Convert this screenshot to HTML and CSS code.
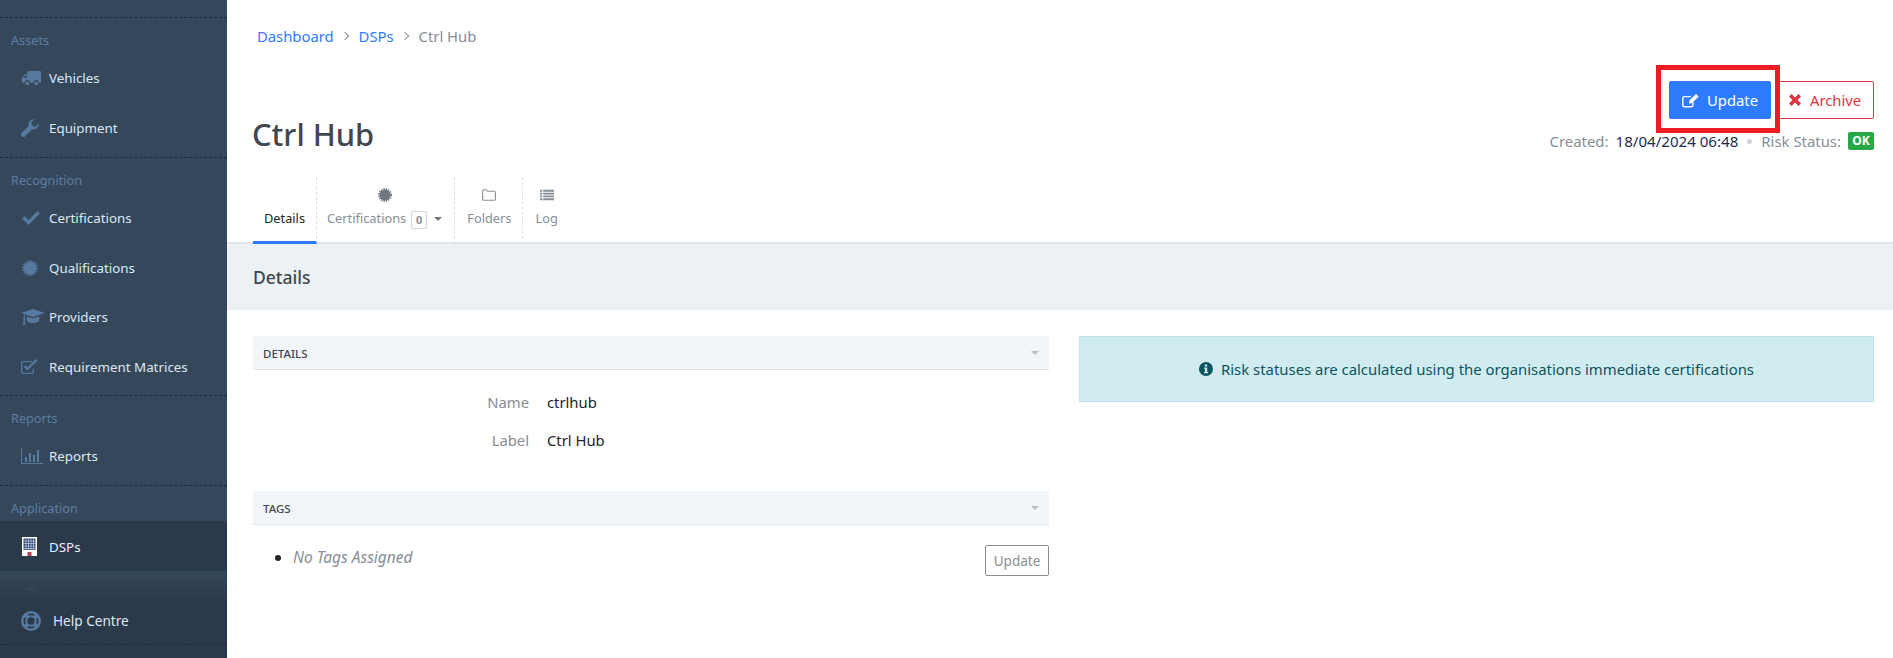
FILE: index.html
```html
<!DOCTYPE html>
<html lang="en">
<head>
<meta charset="utf-8">
<title>Ctrl Hub</title>
<link rel="stylesheet" href="styles.css">
</head>
<body>
<svg class="defs" width="0" height="0" aria-hidden="true">
  <symbol id="i-truck" viewBox="0 0 18 14"><path d="M6 0h11a1 1 0 0 1 1 1v9.500a.5.5 0 0 1-.5.5H16a2.500 2.500 0 0 0-5 0H7.500a2.500 2.500 0 0 0-5 0H1a1 1 0 0 1-1-1V6.500L2.600 3H5V1a1 1 0 0 1 1-1zM1.500 6.500H4.600V4.200H3.100z" fill-rule="evenodd"/><circle cx="5" cy="11.500" r="1.700"/><circle cx="13.500" cy="11.500" r="1.700"/></symbol>
  <symbol id="i-wrench" viewBox="0 0 18 18"><path d="M17.800 4.300c.3 2.500-1 4.900-3.300 5.800-1.200.5-2.500.5-3.600.2L4 17.400c-.8.800-2.100.8-2.900 0l-.6-.6c-.8-.8-.8-2 0-2.800L7.700 7c-.4-1.200-.3-2.500.2-3.600C8.800 1.200 11.200-.1 13.700.200L10.600 3.300v2.100l2 2h2.100z"/></symbol>
  <symbol id="i-check" viewBox="0 0 18 14"><path d="M6.600 14 0 7.400l2.500-2.500 4.100 4.100L15.500 0 18 2.500z"/></symbol>
  <symbol id="i-cert" viewBox="0 0 16 16"><circle cx="8" cy="8" r="6.300"/><circle cx="8" cy="8" r="6.900" fill="none" stroke="currentColor" stroke-width="2.200" stroke-dasharray="1.500 1.210"/></symbol>
  <symbol id="i-cap" viewBox="0 0 24 16"><path d="M12 0 24 4 12 8 4.800 5.600C4.200 6.400 3.900 7.400 3.800 8.500c.4.200.6.600.6 1 0 .4-.2.700-.5.900L4.500 16H2l.6-5.600c-.3-.2-.5-.5-.5-.9 0-.4.200-.8.600-1 .1-1.300.5-2.500 1.200-3.300L0 4z"/><path d="M6 7.500l6 2 6-2 .3 3.500c0 1.600-2.800 3-6.300 3S5.700 12.600 5.700 11z"/></symbol>
  <symbol id="i-checksq" viewBox="0 0 18 16"><path d="M13 9v3.500A2.500 2.500 0 0 1 10.500 15H2.500A2.500 2.500 0 0 1 0 12.500v-8A2.500 2.500 0 0 1 2.500 2h8c.4 0 .8.100 1.100.2l-1.100 1.100H2.500c-.7 0-1.200.5-1.200 1.200v8c0 .7.500 1.200 1.200 1.200h8c.7 0 1.200-.5 1.200-1.200v-2.200z"/><path d="M6.300 11.500 2.600 7.800l1.600-1.600 2.100 2.100L15 0l1.600 1.600z"/></symbol>
  <symbol id="i-bars" viewBox="0 0 22 16"><path d="M0 0h1v15h21v1H0z"/><path d="M4 9h2v5H4zM8 5h2v9H8zM12 7h2v7h-2zM16 2h2v12h-2z"/></symbol>
  <symbol id="i-ring" viewBox="0 0 20 20"><circle cx="10" cy="10" r="10"/><circle cx="10" cy="10" r="3.700" fill="#2b3a4a"/><circle cx="10" cy="10" r="6.600" fill="none" stroke="#2b3a4a" stroke-width="1.700" stroke-dasharray="6.500 3.870" stroke-dashoffset="3.250"/></symbol>
  <symbol id="i-edit" viewBox="0 0 17 15"><path d="M11 9.200v2.900c0 .9-.8 1.700-1.700 1.700H2.500c-.9 0-1.700-.8-1.700-1.700V5.300c0-.9.800-1.700 1.700-1.700h6.300" fill="none" stroke="currentColor" stroke-width="1.400"/><path d="M7 10.500l.3-2.900L14 .9l2.600 2.600-6.700 6.700z"/></symbol>
  <symbol id="i-times" viewBox="0 0 12 12"><path d="M2.600 0 6 3.400 9.400 0 12 2.600 8.600 6 12 9.400 9.400 12 6 8.600 2.600 12 0 9.400 3.400 6 0 2.600z"/></symbol>
  <symbol id="i-info" viewBox="0 0 14 14"><path fill-rule="evenodd" d="M7 0a7 7 0 1 1 0 14A7 7 0 0 1 7 0zM5.800 2.400v2h2.400v-2zM5 5.600v1.200h.9v3.100H5v1.400h4V9.900h-.8V5.600z"/></symbol>
  <symbol id="i-folder" viewBox="0 0 14 12"><path d="M.6 10V2c0-.7.500-1.300 1.200-1.300h2.500L5.600 2.300h6.600c.7 0 1.200.500 1.200 1.200V10c0 .7-.5 1.300-1.200 1.300H1.800C1.100 11.300.6 10.700.6 10z" fill="none" stroke="currentColor" stroke-width="1.100"/></symbol>
  <symbol id="i-list" viewBox="0 0 15 11"><path d="M0 0h2.500v2H0zM3.500 0H15v2H3.500zM0 3h2.500v2H0zM3.500 3H15v2H3.500zM0 6h2.500v2H0zM3.500 6H15v2H3.500zM0 9h2.500v2H0zM3.500 9H15v2H3.500z"/></symbol>
</svg>

<div class="app">
  <aside class="sidebar">
    <section class="nav-group first">
      <h4 class="nav-label">Assets</h4>
      <a class="nav-item"><svg class="nav-icon truck"><use href="#i-truck"/></svg>Vehicles</a>
      <a class="nav-item"><svg class="nav-icon wrench"><use href="#i-wrench"/></svg>Equipment</a>
    </section>
    <section class="nav-group">
      <h4 class="nav-label">Recognition</h4>
      <a class="nav-item"><svg class="nav-icon check"><use href="#i-check"/></svg>Certifications</a>
      <a class="nav-item"><svg class="nav-icon cert"><use href="#i-cert"/></svg>Qualifications</a>
      <a class="nav-item"><svg class="nav-icon cap"><use href="#i-cap"/></svg>Providers</a>
      <a class="nav-item"><svg class="nav-icon checksq"><use href="#i-checksq"/></svg>Requirement Matrices</a>
    </section>
    <section class="nav-group reports">
      <h4 class="nav-label">Reports</h4>
      <a class="nav-item"><svg class="nav-icon bars"><use href="#i-bars"/></svg>Reports</a>
    </section>
    <section class="nav-group">
      <h4 class="nav-label">Application</h4>
      <a class="nav-item active">
        <svg class="nav-icon building" viewBox="0 0 15 19"><rect width="15" height="19" fill="#fff"/><rect x="1.500" y="1.500" width="12" height="11.500" fill="#2c4478"/><path d="M4 1.500v11.500M6.500 1.500v11.500M9 1.500v11.500M11.500 1.500v11.500M1.500 4h12M1.500 6.500h12M1.500 9h12M1.500 11.500h12" stroke="#c9d3dc" stroke-width=".7"/><rect x="5.500" y="15" width="4" height="4" fill="#b5404f"/></svg>DSPs</a>
    </section>
    <footer class="side-foot">
      <a class="nav-item help"><svg class="nav-icon ring"><use href="#i-ring"/></svg>Help Centre</a>
    </footer>
  </aside>

  <main class="main">
    <div class="page-head">
      <nav class="crumbs"><a>Dashboard</a><span class="sep"></span><a>DSPs</a><span class="sep"></span><span class="here">Ctrl Hub</span></nav>
      <div class="title-row">
        <h1 class="title">Ctrl Hub</h1>
        <div class="head-right">
          <div class="actions">
            <button class="btn primary"><svg class="btn-icon"><use href="#i-edit"/></svg>Update</button>
            <button class="btn danger"><svg class="btn-icon small"><use href="#i-times"/></svg>Archive</button>
            <span class="highlight"></span>
          </div>
          <div class="meta"><span class="muted">Created:</span><span class="date">18/04/2024 06:48</span><span class="dot"></span><span class="muted">Risk Status:</span><span class="badge">OK</span></div>
        </div>
      </div>
      <div class="tabs">
        <a class="tab current"><span class="tab-icon"></span><span>Details</span></a>
        <a class="tab tab-cert"><svg class="tab-icon cert-t"><use href="#i-cert"/></svg><span>Certifications<b class="count">0</b><i class="caret"></i></span></a>
        <a class="tab"><svg class="tab-icon folder"><use href="#i-folder"/></svg><span>Folders</span></a>
        <a class="tab"><svg class="tab-icon list"><use href="#i-list"/></svg><span>Log</span></a>
      </div>
    </div>
    <div class="band"><h2>Details</h2></div>
    <div class="body-grid">
      <div class="col">
        <section class="panel">
          <header class="panel-head"><span>DETAILS</span><i class="caret light"></i></header>
          <dl class="fields">
            <dt>Name</dt><dd>ctrlhub</dd>
            <dt>Label</dt><dd>Ctrl Hub</dd>
          </dl>
        </section>
        <section class="panel">
          <header class="panel-head"><span>TAGS</span><i class="caret light"></i></header>
          <div class="tags">
            <ul><li>No Tags Assigned</li></ul>
            <button class="btn outline">Update</button>
          </div>
        </section>
      </div>
      <div class="col">
        <div class="alert"><svg class="alert-icon"><use href="#i-info"/></svg>Risk statuses are calculated using the organisations immediate certifications</div>
      </div>
    </div>
  </main>
</div>
</body>
</html>
```
FILE: styles.css
```css
* { box-sizing: border-box; }
html, body { margin: 0; height: 100%; overflow: hidden; }
body { font-family: "Noto Sans", "Open Sans", sans-serif; font-size: 14.800px; color: #212529; background: #fff; }
.defs { position: absolute; }
.app { display: flex; height: 658px; }

.sidebar { width: 227px; flex: none; display: flex; flex-direction: column; padding-top: 17px; background: #35475b; position: relative; }
.nav-group { border-top: 1px dashed #1f2b38; padding-bottom: 4px; }
.nav-group.first { padding-bottom: 5px; }
.nav-group.reports { padding-bottom: 4.500px; }
.nav-group:last-of-type { padding-bottom: 0; }
.nav-label { margin: 0; height: 35px; padding: 13px 0 0 11px; font-size: 12.700px; line-height: 19px; font-weight: 400; color: #5b7ea3; }
.nav-item { display: flex; align-items: center; height: 49.500px; padding: 1px 0 0 21px; font-size: 13.350px; color: #dbe7f1; position: relative; }
.nav-item.active { height: 50px; background: #2b3a4a; color: #e8f0f6; }
.nav-icon { fill: #56799f; color: #56799f; margin-right: 9px; flex: none; width: 19px; height: 15px; }
.nav-icon.truck { width: 19px; height: 15px; margin-left: 1px; margin-right: 8px; }
.nav-icon.wrench { width: 18px; height: 18px; margin-right: 10px; }
.nav-icon.check { width: 18px; height: 14px; margin-left: 1px; margin-right: 9px; }
.nav-icon.cert { width: 16px; height: 16px; margin-left: 1px; margin-right: 11px; }
.nav-icon.cap { width: 24px; height: 16px; margin-right: 4px; }
.nav-icon.checksq { width: 18px; height: 16px; margin-right: 10px; }
.nav-icon.bars { width: 22px; height: 16px; margin-right: 6px; }
.nav-icon.building { width: 15px; height: 19px; margin-left: 1px; margin-right: 12px; }
.nav-icon.ring { width: 20px; height: 20px; margin-right: 12px; }

.side-foot { margin-top: auto; height: 87px; padding-top: 25px; background: linear-gradient(#35475b 0, #2b3a4a 30px); position: relative; }
.side-foot::before { content: ""; position: absolute; left: 26px; top: 16px; width: 9px; height: 4px; background: #35465a; border-radius: 3px 3px 0 0; }
.nav-item.help { height: 49px; border-bottom: 1px dashed #1f2b38; font-size: 13.600px; color: #dbe7f1; }

.main { flex: 1; min-width: 0; }
.page-head { padding: 0 19px 0 26px; height: 244px; border-bottom: 2px solid #dfe5ea; display: flex; flex-direction: column; }
.crumbs { display: flex; align-items: center; padding: 26px 0 0 4px; height: 46px; line-height: 20px; flex: none; }
.crumbs a { color: #2f7bff; }
.crumbs .here { color: #868e96; }
.sep { width: 6px; height: 6px; margin: 0 11px 0 8px; border-top: 1px solid #868e96; border-right: 1px solid #868e96; transform: rotate(45deg); }

.title-row { display: flex; justify-content: space-between; height: 130px; flex: none; }
.title { margin: 0 0 0 -1px; padding-top: 68px; font-size: 30.800px; line-height: 40px; font-weight: 500; color: #3f4750; }
.head-right { display: flex; flex-direction: column; align-items: flex-end; padding-top: 35px; }
.actions { display: flex; gap: 4px; position: relative; height: 38px; }
.btn { font-family: inherit; font-size: 14.800px; border-radius: 2px; display: inline-flex; align-items: center; background: #fff; border: 1px solid; padding: 0; }
.primary { width: 102px; height: 38px; padding-left: 12px; background: #2f7bff; border-color: #2f7bff; color: #fff; fill: #fff; }
.danger { width: 99px; height: 38px; padding-left: 13px; border-color: #dc3545; color: #dc3545; fill: #dc3545; }
.btn-icon { width: 17px; height: 15px; margin-right: 8px; }
.btn-icon.small { width: 12px; height: 12px; margin: 0 9px 0 0; }
.highlight { position: absolute; left: -13px; top: -16px; width: 124px; height: 68px; border: 5px solid #ed1c24; }
.meta { display: flex; align-items: center; height: 18px; margin-top: 13px; white-space: nowrap; font-size: 14.900px; }
.muted { color: #868e96; }
.date { color: #1f2d4d; margin-left: 7px; font-size: 15.100px; }
.dot { width: 5px; height: 5px; border-radius: 50%; background: #ced4da; margin: 0 9px; }
.badge { margin-left: 7px; width: 26px; height: 18px; background: #28a745; color: #fff; font-size: 12px; font-weight: 700; line-height: 18px; text-align: center; border-radius: 2px; }

.tabs { display: flex; height: 67px; margin-top: auto; margin-bottom: -2px; position: relative; }
.tab { display: flex; flex-direction: column; align-items: center; padding: 11px 11px 0 12px; font-size: 12.800px; color: #868e96; border-right: 1px dashed #dcdfe3; height: 67px; }
.tab:last-child { border-right: 0; }
.tab.current { color: #212529; border-bottom: 3px solid #2f7bff; width: 64px; padding: 11px 0 0; }
.tab-cert { padding: 11px 12px 0 10px; }
.tab > span:last-child { line-height: 18px; margin-top: 7px; white-space: nowrap; }
.tab-icon { height: 14px; width: 14px; fill: #868e96; color: #868e96; }
.cert-t { fill: #6f7780; color: #6f7780; }
.folder { color: #868e96; fill: none; }
.count { display: inline-block; width: 16px; height: 18px; line-height: 16px; margin-left: 5px; border: 1px solid #ced4da; border-radius: 2px; font-size: 11px; text-align: center; font-weight: 700; vertical-align: -1px; }
.caret { display: inline-block; margin-left: 7px; vertical-align: 2px; border: 4px solid transparent; border-top-color: #6f7780; border-bottom: 0; }
.caret.light { margin: 0; border-top-color: #b9bfc6; }

.band { height: 66px; background: #ecf1f5; padding: 0 26px; display: flex; align-items: center; }
.band h2 { margin: 0; font-size: 17.500px; font-weight: 500; color: #3f4750; }

.body-grid { display: grid; grid-template-columns: 796px 795px; gap: 30px; padding: 26px 19px 0 26px; }
.panel-head { height: 34px; padding: 1px 10px 0; display: flex; align-items: center; justify-content: space-between; background: #f3f6f9; border-bottom: 1px solid #dfe5ea; font-size: 11.500px; font-weight: 500; color: #3f4750; }
.fields { display: grid; grid-template-columns: 276px 1fr; column-gap: 18px; row-gap: 18px; align-content: start; margin: 0; padding: 22px 0 0; height: 121px; line-height: 20px; }
.fields dt { text-align: right; color: #868e96; }
.fields dd { margin: 0; color: #212529; }
.tags { display: flex; justify-content: space-between; padding-top: 20px; }
.tags ul { margin: 0; padding: 0 0 0 40px; }
.tags li { font-style: italic; color: #868e96; line-height: 24px; font-size: 15.500px; }
.tags li::marker { color: #212529; }
.outline { width: 64px; height: 31px; justify-content: center; border-color: #868e96; color: #868e96; font-size: 13.500px; }
.alert { height: 66px; display: flex; align-items: center; justify-content: center; background: #d1ecf1; border: 1px solid #bee5eb; color: #0c5460; font-size: 14.900px; }
.alert-icon { width: 14px; height: 14px; fill: #0c5460; margin-right: 8px; }
```
